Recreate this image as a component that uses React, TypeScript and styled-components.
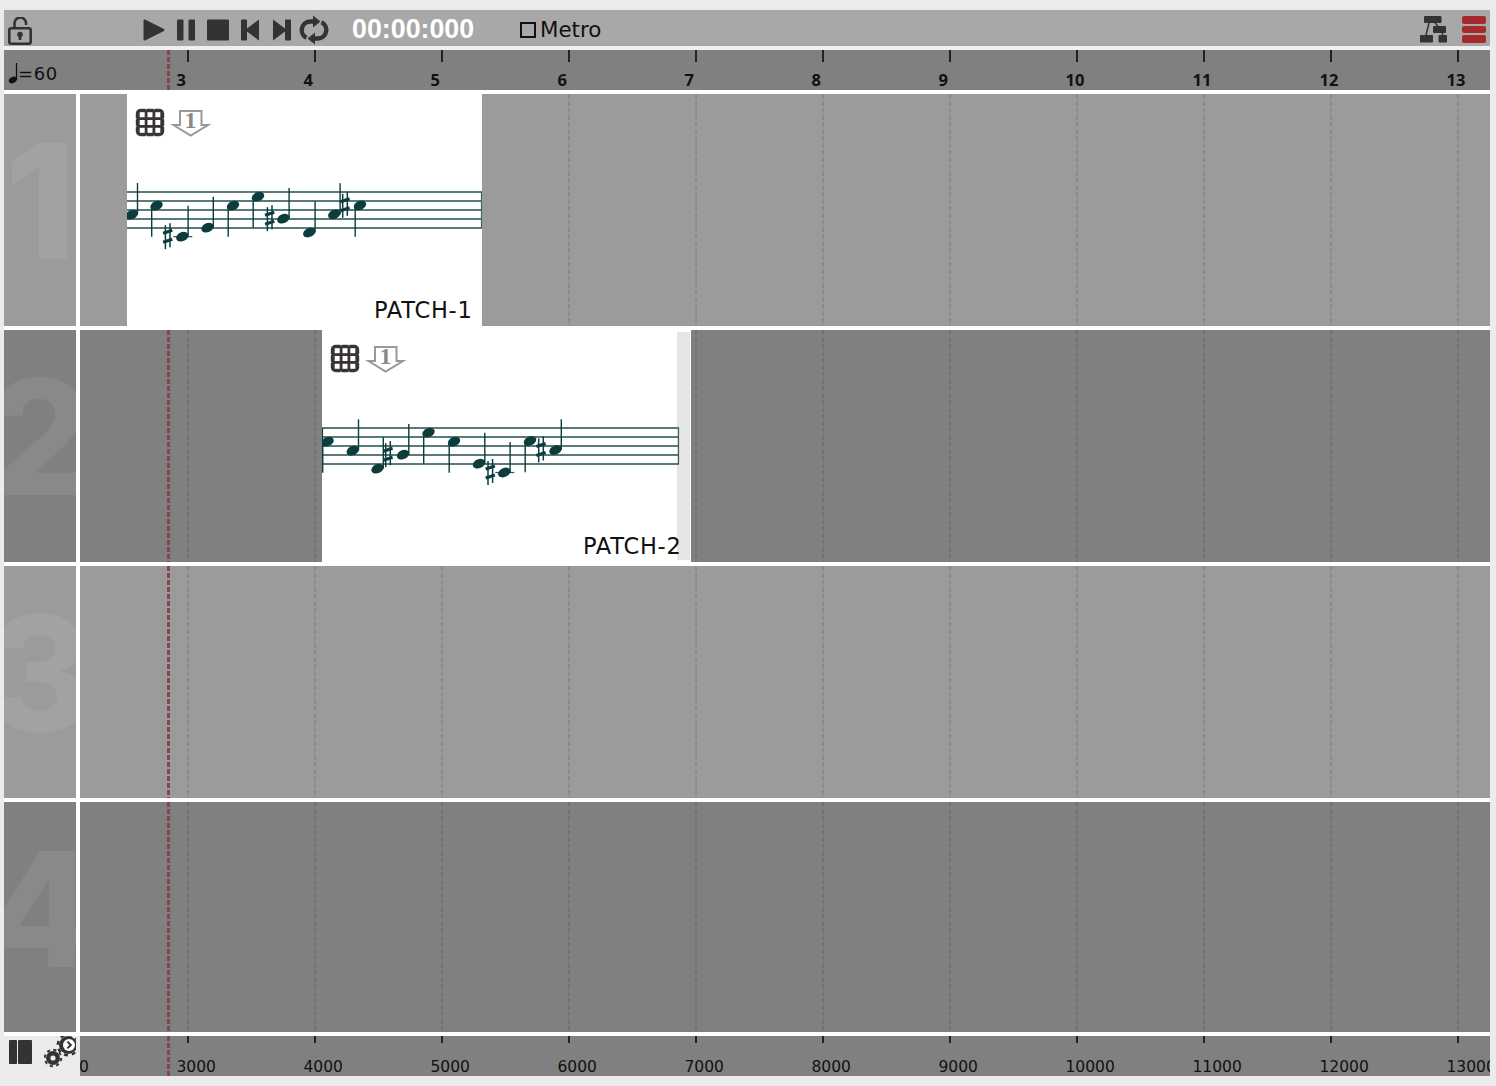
import styled, { createGlobalStyle } from 'styled-components';

const TICKS = [3, 4, 5, 6, 7, 8, 9, 10, 11, 12, 13];
const TICK_STEP = 127;
const tickX = (n: number) => 188 + (n - 3) * TICK_STEP;
const PLAYHEAD_X = 168;
const LANE_X = 80;

const GlobalStyle = createGlobalStyle`
  html, body {
    margin: 0;
    padding: 0;
    background: #ebebeb;
  }
  body {
    font-family: "DejaVu Sans", "Liberation Sans", sans-serif;
  }
`;

const Frame = styled.div`
  width: 1486px;
  margin: 10px 0 10px 4px;
  background: #fff;
  display: flex;
  flex-direction: column;
`;

const Toolbar = styled.div`
  height: 40px;
  box-sizing: border-box;
  padding: 3px 4px 0 4px;
  background: #a8a8a8;
  border-bottom: 4px solid #f0f0f0;
  display: flex;
  align-items: center;
`;

const LockIcon = styled.svg`
  width: 24px;
  height: 29px;
  flex-shrink: 0;
  align-self: flex-end;
`;

const Transport = styled.div`
  display: flex;
  margin-left: 106px;
`;

const TransportIcon = styled.svg`
  width: 32px;
  height: 28px;
  fill: #333;
  display: block;
  overflow: visible;
`;

const Timer = styled.div`
  margin: 0 0 2px 22px;
  width: 122px;
  color: #fff;
  font-family: "Liberation Sans", sans-serif;
  font-weight: 700;
  font-size: 26.8px;
  line-height: 28px;
  white-space: nowrap;
`;

const Metro = styled.label`
  margin-left: 46px;
  display: flex;
  align-items: center;
  gap: 4px;
  font-size: 21.4px;
  line-height: 24px;
  color: #111;
`;

const MetroBox = styled.span`
  width: 16px;
  height: 16px;
  box-sizing: border-box;
  border: 2px solid #111;
  background: #a8a8a8;
`;

const ToolbarRight = styled.div`
  margin-left: auto;
  display: flex;
  align-items: center;
  gap: 15px;
`;

const TreeIcon = styled.svg`
  width: 27px;
  height: 27px;
  display: block;
`;

const StackIcon = styled.div`
  width: 24px;
  display: flex;
  flex-direction: column;
  gap: 2px;
`;

const StackBar = styled.span`
  height: 7.6px;
  border-radius: 2px;
  background: #a52a2c;
`;

const Ruler = styled.div<{ $compact?: boolean }>`
  position: relative;
  height: 40px;
  background: #808080;
  overflow: hidden;
  ${(p) => (p.$compact ? 'flex: 1;' : 'margin-bottom: 4px;')}
`;

const Tempo = styled.div`
  height: 100%;
  display: flex;
  align-items: center;
  padding: 6px 0 0 3px;
  box-sizing: border-box;
  font-size: 18px;
  letter-spacing: 0.6px;
  color: #111;
`;

const Tick = styled.span`
  position: absolute;
  top: 0;
  width: 2px;
  height: 12px;
  background: #222;
`;

const BottomTick = styled(Tick)`
  height: 7px;
`;

const BarLabel = styled.span`
  position: absolute;
  top: 21px;
  font-family: "Open Sans", sans-serif;
  font-size: 16.5px;
  font-weight: 700;
  line-height: 18px;
  color: #111;
`;

const TimeLabel = styled.span`
  position: absolute;
  top: 22px;
  font-size: 15.5px;
  line-height: 18px;
  color: #111;
  white-space: nowrap;
`;

const Playhead = styled.span`
  position: absolute;
  top: 0;
  bottom: 0;
  width: 2.5px;
  background: repeating-linear-gradient(to bottom, #84484c 0 5px, transparent 5px 7px);
`;

const TrackRow = styled.div<{ $height: number }>`
  display: grid;
  grid-template-columns: 72px 1fr;
  column-gap: 4px;
  height: ${(p) => p.$height}px;
  margin-bottom: 4px;
`;

const TrackHeader = styled.div<{ $alt: boolean }>`
  background: ${(p) => (p.$alt ? '#808080' : '#9b9b9b')};
  overflow: hidden;
  display: flex;
  justify-content: center;
  padding-top: 17px;
  box-sizing: border-box;
`;

const TrackNumber = styled.span`
  font-family: Inter, "Liberation Sans", sans-serif;
  font-weight: 800;
  font-size: 160px;
  line-height: 180px;
  height: 180px;
  color: rgba(255, 255, 255, 0.07);
`;

const Lane = styled.div<{ $alt: boolean }>`
  position: relative;
  overflow: hidden;
  background: ${(p) => (p.$alt ? '#808080' : '#9b9b9b')};
`;

const GridLine = styled.span`
  position: absolute;
  top: 0;
  bottom: 0;
  width: 2px;
  background: repeating-linear-gradient(to bottom, rgba(0, 0, 0, 0.1) 0 5px, transparent 5px 7px);
`;

const Patch = styled.div`
  position: absolute;
  top: 0;
  bottom: 0;
  background: #fff;
  display: flex;
  flex-direction: column;
`;

const PatchIcons = styled.div`
  display: flex;
  align-items: center;
  gap: 7px;
  padding: 13px 0 0 8px;
  height: 30px;
`;

const DropIcon = styled.svg`
  margin-top: 3px;
  overflow: visible;
`;

const Score = styled.svg`
  position: relative;
  z-index: 1;
  display: block;
  height: 80px;
  margin-top: 37px;
  flex-shrink: 0;
`;

const PatchLabel = styled.div`
  position: relative;
  z-index: 1;
  margin-top: auto;
  align-self: flex-end;
  padding: 0 9.5px 3px 0;
  font-size: 22.5px;
  letter-spacing: 0.75px;
  line-height: 26px;
  color: #111;
`;

const PatchStrip = styled.span`
  position: absolute;
  top: 2px;
  bottom: 2px;
  right: 1px;
  width: 13px;
  background: #e5e5e5;
`;

const FooterRow = styled.div`
  display: grid;
  grid-template-columns: 72px 1fr;
  column-gap: 4px;
  height: 40px;
  background: #ebebeb;
`;

const FooterTools = styled.div`
  display: flex;
  gap: 12px;
  padding-left: 5px;
  overflow: hidden;
`;

const ColumnsIcon = styled.svg`
  width: 23px;
  height: 24px;
  margin-top: 4px;
  flex-shrink: 0;
`;

const GearsIcon = styled.svg`
  width: 32px;
  height: 32px;
  flex-shrink: 0;
`;

type Note = { x: number; y: number; up: boolean; tip: number; sharp?: number; ledger?: boolean };

const patch1Notes: Note[] = [
  { x: 131.7, y: 214.7, up: true, tip: 183 },
  { x: 156.5, y: 205.7, up: false, tip: 236.7 },
  { x: 182.3, y: 236.7, up: true, tip: 205.7, sharp: 167.7, ledger: true },
  { x: 207.5, y: 227.7, up: true, tip: 196.7 },
  { x: 233, y: 205.7, up: false, tip: 236.7 },
  { x: 258, y: 196.7, up: false, tip: 227.7 },
  { x: 283.3, y: 218.7, up: true, tip: 188, sharp: 269.7 },
  { x: 309.3, y: 232.5, up: true, tip: 201.3 },
  { x: 334.3, y: 214.3, up: true, tip: 183.3 },
  { x: 360, y: 205.3, up: false, tip: 236.7, sharp: 345 },
];

const patch2Notes: Note[] = [
  { x: 327.5, y: 441.7, up: false, tip: 472.7 },
  { x: 352.7, y: 450.7, up: true, tip: 419.3 },
  { x: 377.5, y: 468.7, up: true, tip: 437.3 },
  { x: 403, y: 454.7, up: true, tip: 424, sharp: 388 },
  { x: 428.5, y: 432.7, up: false, tip: 463.7 },
  { x: 454, y: 441.7, up: false, tip: 472.7 },
  { x: 479, y: 463.7, up: true, tip: 432.7 },
  { x: 504.3, y: 472.5, up: true, tip: 442, sharp: 490.3, ledger: true },
  { x: 530, y: 441, up: false, tip: 472.3 },
  { x: 555.5, y: 450, up: true, tip: 419.3, sharp: 541 },
];

const INK = '#0d3c3c';

function Sharp({ x, y }: { x: number; y: number }) {
  return (
    <g stroke={INK}>
      <line x1={x - 2.3} y1={y - 11} x2={x - 2.3} y2={y + 13} strokeWidth={1.5} />
      <line x1={x + 2.3} y1={y - 13} x2={x + 2.3} y2={y + 11} strokeWidth={1.5} />
      <line x1={x - 4.6} y1={y - 3} x2={x + 4.6} y2={y - 6} strokeWidth={3.2} />
      <line x1={x - 4.6} y1={y + 6} x2={x + 4.6} y2={y + 3} strokeWidth={3.2} />
    </g>
  );
}

function Staff({ x, y, width, height, staffTop, staffLeft, staffRight, notes, leftBar }: {
  x: number;
  y: number;
  width: number;
  height: number;
  staffTop: number;
  staffLeft: number;
  staffRight: number;
  notes: Note[];
  leftBar?: boolean;
}) {
  return (
    <Score viewBox={`${x} ${y} ${width} ${height}`} width={width}>
      {[0, 1, 2, 3, 4].map((i) => (
        <line
          key={i}
          x1={staffLeft}
          x2={staffRight}
          y1={staffTop + i * 9}
          y2={staffTop + i * 9}
          stroke="#5a7b7b"
          strokeWidth={2}
        />
      ))}
      {leftBar && (
        <line x1={staffLeft + 0.5} x2={staffLeft + 0.5} y1={staffTop} y2={staffTop + 36} stroke={INK} strokeWidth={1.2} />
      )}
      <line x1={staffRight - 0.5} x2={staffRight - 0.5} y1={staffTop} y2={staffTop + 36} stroke="#3d6060" strokeWidth={1.2} />
      {notes.map((n) => {
        const stemX = n.up ? n.x + 5.8 : n.x - 4.8;
        return (
          <g key={n.x}>
            {n.ledger && <line x1={n.x - 9} x2={n.x + 10} y1={n.y} y2={n.y} stroke="#2a5252" strokeWidth={1.2} />}
            <line x1={stemX} x2={stemX} y1={n.y} y2={n.tip} stroke={INK} strokeWidth={1.4} />
            <ellipse cx={n.x} cy={n.y} rx={6.5} ry={4.5} transform={`rotate(-24 ${n.x} ${n.y})`} fill={INK} />
            {n.sharp !== undefined && <Sharp x={n.sharp} y={n.y - 0.5} />}
          </g>
        );
      })}
    </Score>
  );
}

function GridBadge() {
  const cells = [0, 1, 2];
  return (
    <svg width={30} height={29} viewBox="0 0 30 29">
      <rect x={0.8} y={0.8} width={28.4} height={27.4} rx={5} fill="#3a3434" />
      {cells.map((r) =>
        cells.map((c) => (
          <rect key={`${r}${c}`} x={4.7 + c * 7.8} y={4.2 + r * 7.8} width={5} height={5} fill="#fff" />
        )),
      )}
      {[0, 1].map((c) => (
        <g key={c} fill="#fff">
          <rect x={10.4 + c * 7.8} y={0} width={1.4} height={1.4} />
          <rect x={10.4 + c * 7.8} y={27.6} width={1.4} height={1.4} />
          <rect x={0} y={9.9 + c * 7.8} width={1.4} height={1.4} />
          <rect x={28.6} y={9.9 + c * 7.8} width={1.4} height={1.4} />
        </g>
      ))}
    </svg>
  );
}

function DropBadge() {
  return (
    <DropIcon width={38} height={27} viewBox="0 0 38 27">
      <path
        d="M8 1 H29.5 V15 H36 L18.7 25.6 L1.5 15 H8 Z"
        fill="#fff"
        stroke="#999"
        strokeWidth={2}
      />
      <text x={18.6} y={18} opacity={0.99} textAnchor="middle" fontFamily="Liberation Serif, serif" fontWeight={700} fontSize={24} fill="#888">
        1
      </text>
    </DropIcon>
  );
}

function NoteGlyph() {
  return (
    <svg width={11} height={22} viewBox="0 0 11 22">
      <line x1={9.5} x2={9.5} y1={1} y2={18} stroke="#111" strokeWidth={1.3} />
      <ellipse cx={5.8} cy={18} rx={4.2} ry={3} transform="rotate(-24 5.8 18)" fill="#111" />
    </svg>
  );
}

function LaneMarks() {
  return (
    <>
      {TICKS.map((n) => (
        <GridLine key={n} style={{ left: tickX(n) - 1 - LANE_X }} />
      ))}
      <Playhead style={{ left: PLAYHEAD_X - 1 - LANE_X }} />
    </>
  );
}

export default function App() {
  const tracks = [
    { n: 1, height: 232 },
    { n: 2, height: 232 },
    { n: 3, height: 232 },
    { n: 4, height: 230 },
  ];

  return (
    <>
      <GlobalStyle />
      <Frame>
        <Toolbar>
          <LockIcon viewBox="0 0 24 29">
            <path d="M6.5 12 V7 A5.8 5.8 0 0 1 18 5.5 V8" fill="none" stroke="#333" strokeWidth={2.6} />
            <rect x={1.3} y={11.3} width={21.4} height={15.4} rx={2} fill="none" stroke="#333" strokeWidth={2.6} />
            <circle cx={12} cy={17.5} r={2.8} fill="#333" />
            <rect x={10.6} y={18} width={2.8} height={5} fill="#333" />
          </LockIcon>
          <Transport>
            <TransportIcon viewBox="0 0 32 28">
              <path d="M6.5 4.5 L25.5 14 L6.5 23.5 Z" stroke="#333" strokeWidth={2} strokeLinejoin="round" />
            </TransportIcon>
            <TransportIcon viewBox="0 0 32 28">
              <rect x={7} y={3.5} width={6.5} height={21} rx={1} />
              <rect x={18.5} y={3.5} width={6.5} height={21} rx={1} />
            </TransportIcon>
            <TransportIcon viewBox="0 0 32 28">
              <rect x={5} y={3.5} width={22} height={21} rx={1} />
            </TransportIcon>
            <TransportIcon viewBox="0 0 32 28">
              <rect x={7} y={3.5} width={6} height={21} rx={0.8} />
              <path d="M25 3.5 V24.5 L11 14 Z" />
            </TransportIcon>
            <TransportIcon viewBox="0 0 32 28">
              <rect x={19} y={3.5} width={6} height={21} rx={0.8} />
              <path d="M7 3.5 V24.5 L21 14 Z" />
            </TransportIcon>
            <TransportIcon viewBox="0 0 32 28">
              <path d="M15 5.5 H12 A8.6 8.6 0 0 0 8.5 21.8" fill="none" stroke="#333" strokeWidth={4.4} />
              <path d="M17 22.5 H20 A8.6 8.6 0 0 0 23.5 6.2" fill="none" stroke="#333" strokeWidth={4.4} />
              <path d="M15 -0.5 L22.5 5.5 L15 11.5 Z" />
              <path d="M17 16.5 L9.5 22.5 L17 28.5 Z" />
            </TransportIcon>
          </Transport>
          <Timer>00:00:000</Timer>
          <Metro>
            <MetroBox />
            Metro
          </Metro>
          <ToolbarRight>
            <TreeIcon viewBox="0 0 27 27">
              <g fill="#333">
                <rect x={4} y={0} width={17.5} height={7} rx={1} />
                <rect x={13} y={10} width={13} height={7} rx={1} />
                <rect x={0} y={19} width={13} height={7.5} rx={1} />
                <rect x={18.5} y={19} width={8.5} height={7.5} rx={1} />
              </g>
              <g stroke="#333" strokeWidth={1.5}>
                <line x1={9} y1={7} x2={6} y2={19} />
                <line x1={15} y1={7} x2={18} y2={10} />
                <line x1={22.5} y1={17} x2={22.5} y2={19} />
              </g>
            </TreeIcon>
            <StackIcon>
              <StackBar />
              <StackBar />
              <StackBar />
            </StackIcon>
          </ToolbarRight>
        </Toolbar>

        <Ruler>
          <Tempo>
            <NoteGlyph />
            <span>=60</span>
          </Tempo>
          {TICKS.map((n) => (
            <span key={n}>
              <Tick style={{ left: tickX(n) - 1 - 4 }} />
              <BarLabel style={{ left: tickX(n) - 11.5 - 4 }}>{n}</BarLabel>
            </span>
          ))}
          <Playhead style={{ left: PLAYHEAD_X - 1 - 4 }} />
        </Ruler>

        {tracks.map((t) => {
          const alt = t.n % 2 === 0;
          return (
            <TrackRow key={t.n} $height={t.height}>
              <TrackHeader $alt={alt}>
                <TrackNumber>{t.n}</TrackNumber>
              </TrackHeader>
              <Lane $alt={alt}>
                <LaneMarks />
                {t.n === 1 && (
                  <Patch style={{ left: 47, width: 355 }}>
                    <PatchIcons>
                      <GridBadge />
                      <DropBadge />
                    </PatchIcons>
                    <Staff x={127} y={174} width={355} height={80} staffTop={192} staffLeft={127} staffRight={482} notes={patch1Notes} />
                    <PatchLabel>PATCH-1</PatchLabel>
                  </Patch>
                )}
                {t.n === 2 && (
                  <Patch style={{ left: 242, width: 369 }}>
                    <PatchStrip />
                    <PatchIcons>
                      <GridBadge />
                      <DropBadge />
                    </PatchIcons>
                    <Staff x={322} y={410} width={369} height={80} staffTop={428} staffLeft={322} staffRight={679} notes={patch2Notes} leftBar />
                    <PatchLabel>PATCH-2</PatchLabel>
                  </Patch>
                )}
              </Lane>
            </TrackRow>
          );
        })}

        <FooterRow>
          <FooterTools>
            <ColumnsIcon viewBox="0 0 23 24">
              <rect x={0} y={0} width={8} height={24} rx={0.8} fill="#333" />
              <rect x={9} y={0} width={14} height={24} rx={0.8} fill="#333" />
            </ColumnsIcon>
            <GearsIcon viewBox="0 0 32 32">
              <circle cx={9} cy={22} r={7} fill="#333" />
              <circle cx={9} cy={22} r={8.2} fill="none" stroke="#333" strokeWidth={2} strokeDasharray="3.2 3.24" />
              <circle cx={9} cy={22} r={2.6} fill="#ebebeb" />
              <circle cx={24} cy={9} r={9} fill="#333" />
              <circle cx={24} cy={9} r={10.2} fill="none" stroke="#333" strokeWidth={2.4} strokeDasharray="4 4" />
              <circle cx={25} cy={9} r={6} fill="#fff" />
              <path d="M23.4 5.6 L26.8 9 L23.4 12.4" fill="none" stroke="#333" strokeWidth={2} />
            </GearsIcon>
          </FooterTools>
          <Ruler $compact>
            {[2, ...TICKS].map((n) => (
              <span key={n}>
                <BottomTick style={{ left: tickX(n) - 1 - LANE_X }} />
                <TimeLabel style={{ left: tickX(n) - 11.5 - LANE_X }}>{n * 1000}</TimeLabel>
              </span>
            ))}
            <Playhead style={{ left: PLAYHEAD_X - 1 - LANE_X }} />
          </Ruler>
        </FooterRow>
      </Frame>
    </>
  );
}
